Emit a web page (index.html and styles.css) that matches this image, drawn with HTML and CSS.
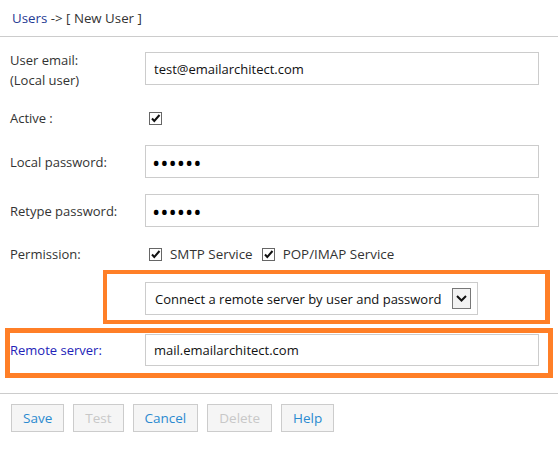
FILE: index.html
```html
<!DOCTYPE html>
<html lang="en">
<head>
    <meta charset="UTF-8">
    <meta name="viewport" content="width=device-width, initial-scale=1.0">
    <title>New User</title>
    <link rel="stylesheet" href="styles.css">
</head>
<body>
    <header class="crumb">
        <a href="#" class="crumb-link">Users</a> -&gt; [ New User ]
    </header>
    <main class="form">
        <div class="row row-email">
            <label class="label" for="email">User email:<br>(Local user)</label>
            <input type="text" id="email" class="field" value="test@emailarchitect.com">
        </div>

        <div class="row row-small">
            <span class="label">Active<span class="colon">:</span></span>
            <span class="check"><svg width="13" height="13" viewBox="0 0 13 13"><path d="M3 6.5 L5.3 9 L10.5 3" fill="none" stroke="#111" stroke-width="2"/></svg></span>
        </div>

        <div class="row row-pass">
            <label class="label" for="pass">Local password:</label>
            <input type="password" id="pass" class="field field-pass" value="123456">
        </div>

        <div class="row row-retype">
            <label class="label" for="retype">Retype password:</label>
            <input type="password" id="retype" class="field field-pass" value="123456">
        </div>

        <div class="row row-perm">
            <span class="label">Permission:</span>
            <span class="check"><svg width="13" height="13" viewBox="0 0 13 13"><path d="M3 6.5 L5.3 9 L10.5 3" fill="none" stroke="#111" stroke-width="2"/></svg></span>
            <span class="check-text">SMTP Service</span>
            <span class="check"><svg width="13" height="13" viewBox="0 0 13 13"><path d="M3 6.5 L5.3 9 L10.5 3" fill="none" stroke="#111" stroke-width="2"/></svg></span>
            <span class="check-text">POP/IMAP Service</span>
        </div>

        <!-- highlighted: connection type -->
        <div class="mark mark-select">
            <div class="select">
                <span class="select-text">Connect a remote server by user and password</span>
                <span class="select-arrow"><svg width="11" height="7" viewBox="0 0 11 7"><path d="M1 1 L5.5 5.5 L10 1" fill="none" stroke="#111" stroke-width="2"/></svg></span>
            </div>
        </div>

        <!-- highlighted: remote server -->
        <div class="mark mark-server">
            <div class="row row-server">
                <label class="label label-blue" for="server">Remote server:</label>
                <input type="text" id="server" class="field" value="mail.emailarchitect.com">
            </div>
        </div>
    </main>

    <div class="buttons">
        <button class="btn">Save</button>
        <button class="btn" disabled>Test</button>
        <button class="btn">Cancel</button>
        <button class="btn" disabled>Delete</button>
        <button class="btn">Help</button>
    </div>
</body>
</html>
```

FILE: styles.css
```css
body {
    margin: 0;
    padding: 0;
    background: white;
    font-family: "Open Sans", "Noto Sans", Arial, sans-serif;
    font-size: 13px;
    color: #333;
}

.crumb {
    height: 37px;
    line-height: 36px;
    padding-left: 12px;
    font-size: 13.3px;
    color: #333;
    border-bottom: 1px solid #ccc;
    box-sizing: border-box;
}

.crumb-link {
    color: #1f3a93;
    text-decoration: none;
}

.form {
    padding-top: 13px;
}

.row {
    display: flex;
    align-items: center;
    padding-left: 10px;
}

.label {
    width: 135px;
    flex-shrink: 0;
    line-height: 20px;
}

.colon {
    margin-left: 3px;
}

.label-blue {
    color: #2323b8;
}

.field {
    width: 394px;
    height: 33px;
    box-sizing: border-box;
    border: 1px solid #ccc;
    padding: 0 8px;
    font-family: inherit;
    font-size: 13px;
    color: #111;
    margin: 0;
    outline: none;
}

.field-pass {
    font-size: 22px;
    letter-spacing: 0;
    padding-left: 6px;
    color: #000;
}

.row-email {
    align-items: flex-start;
}

.row-email .field {
    margin-top: 2px;
}

.row-small {
    margin-top: 18px;
    height: 20px;
}

.row-pass {
    margin-top: 17px;
}

.row-retype {
    margin-top: 16px;
}

.row-perm {
    margin-top: 17px;
    height: 20px;
}

.check {
    width: 13px;
    height: 13px;
    box-sizing: border-box;
    border: 1px solid #666;
    background: white;
    display: flex;
    margin-left: 4px;
}

.check svg {
    margin: -1px;
}

.check-text {
    margin-left: 8px;
    margin-right: 9px;
    font-size: 13.4px;
}

.check-text + .check {
    margin-left: 0;
}

.mark {
    border: 4px solid #ff7f27;
}

.mark-select {
    margin: 6px 0 0 103px;
    padding: 8px 0 5px 38px;
    width: 400px;
    border-width: 4px 5px 4px 4px;
}

.select {
    width: 333px;
    height: 33px;
    box-sizing: border-box;
    border: 1px solid #ccc;
    display: flex;
    align-items: center;
    padding: 0 6px 0 9px;
    color: #111;
}

.select-text {
    flex: 1;
}

.select-arrow {
    width: 19px;
    height: 21px;
    box-sizing: border-box;
    border: 1px solid #777;
    background: #f2f2f2;
    display: flex;
    align-items: center;
    justify-content: center;
}

.mark-server {
    border-width: 5px;
    margin: 4px 5px 0 5px;
    padding: 1px 0 7px 0;
}

.mark-server .row {
    padding-left: 0;
}

.mark-server .field {
    height: 32px;
}

.buttons {
    margin-top: 15px;
    border-top: 1px solid #ccc;
    padding: 10px 0 0 11px;
    display: flex;
    gap: 9px;
}

.btn {
    height: 28px;
    padding: 0 11px;
    background: #f5f5f5;
    border: 1px solid #ccc;
    color: #2b8ad0;
    font-family: inherit;
    font-size: 13.5px;
    cursor: pointer;
}

.btn:disabled {
    color: #c8c8c8;
    cursor: default;
}
```
